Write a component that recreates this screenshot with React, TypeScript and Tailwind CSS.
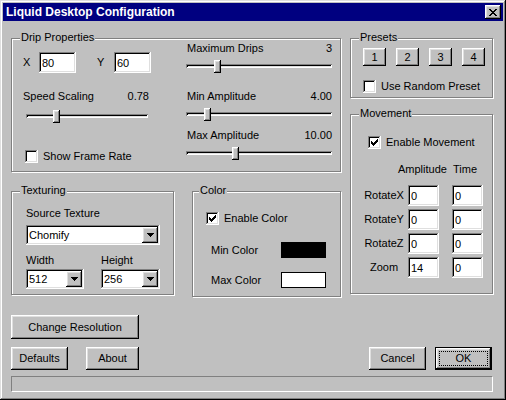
import React from 'react';

// classic win98 bevels
const raised =
  'bg-[#c0c0c0] shadow-[inset_-1px_-1px_#000,inset_1px_1px_#fff,inset_-2px_-2px_#808080,inset_2px_2px_#dfdfdf]';
const sunken =
  'bg-white shadow-[inset_-1px_-1px_#fff,inset_1px_1px_#808080,inset_-2px_-2px_#dfdfdf,inset_2px_2px_#000]';

function Group({ label, className = '', labelClass = 'left-[8px]', children }: { label: string; className?: string; labelClass?: string; children?: React.ReactNode }) {
  return (
    <div className={`relative border border-[#808080] shadow-[1px_1px_0_#fff,inset_1px_1px_0_#fff] ${className}`}>
      <span className={`absolute -top-[8px] bg-[#c0c0c0] px-[1px] ${labelClass}`}>{label}</span>
      {children}
    </div>
  );
}

function Field({ value, className = '' }: { value: string; className?: string }) {
  return (
    <input
      readOnly
      value={value}
      className={`h-[21px] pl-[3px] text-[11px] outline-none ${sunken} ${className}`}
    />
  );
}

function Arrow() {
  return (
    <svg width="7" height="4" shapeRendering="crispEdges">
      <path d="M0 0h7v1H0z M1 1h5v1H1z M2 2h3v1H2z M3 3h1v1H3z" fill="#000" />
    </svg>
  );
}

function Combo({ value, className = '' }: { value: string; className?: string }) {
  return (
    <div className={`flex h-[20px] items-center p-[2px] ${sunken} ${className}`}>
      <span className="flex-1 pl-[1px]">{value}</span>
      <div className={`flex h-[16px] w-[16px] items-center justify-center ${raised}`}>
        <Arrow />
      </div>
    </div>
  );
}

function Check({ label, checked = false, className = '' }: { label: string; checked?: boolean; className?: string }) {
  return (
    <div className={`flex items-center ${className}`}>
      <div className={`relative h-[13px] w-[13px] shrink-0 ${sunken}`}>
        {checked && (
          <svg className="absolute left-[3px] top-[3px]" width="7" height="7" shapeRendering="crispEdges">
            <path
              d="M6 0h1v1h-1z M5 1h2v1h-2z M0 2h1v1h-1z M4 2h3v1h-3z M0 3h2v1h-2z M3 3h3v1h-3z M0 4h5v1h-5z M1 5h3v1h-3z M2 6h1v1h-1z"
              fill="#000"
            />
          </svg>
        )}
      </div>
      <span className="ml-[5px]">{label}</span>
    </div>
  );
}

function Slider({ className = '', thumb }: { className?: string; thumb: string }) {
  return (
    <div className={`relative h-[13px] ${className}`}>
      <div className="absolute left-0 right-0 top-[4px] h-[4px] shadow-[inset_1px_1px_#808080,inset_-1px_-1px_#fff,inset_2px_2px_#000,inset_-2px_-2px_#dfdfdf]" />
      <div className={`absolute top-0 h-[13px] w-[7px] ${raised} ${thumb}`} />
    </div>
  );
}

function Btn({ children, className = '' }: { children: React.ReactNode; className?: string }) {
  return <button className={`flex items-center justify-center text-[11px] ${raised} ${className}`}>{children}</button>;
}

function LabelRow({ label, value, className = '' }: { label: string; value: string; className?: string }) {
  return (
    <div className={`flex justify-between ${className}`}>
      <span>{label}</span>
      <span>{value}</span>
    </div>
  );
}

const movement: [string, string, string][] = [
  ['RotateX', '0', '0'],
  ['RotateY', '0', '0'],
  ['RotateZ', '0', '0'],
  ['Zoom', '14', '0'],
];

export default function App() {
  return (
    <div className="flex h-[400px] w-[506px] flex-col bg-[#c0c0c0] p-[3px] font-['Liberation_Sans',Arial,sans-serif] text-[11px] leading-[13px] text-black shadow-[inset_-1px_-1px_#000,inset_1px_1px_#dfdfdf,inset_-2px_-2px_#808080,inset_2px_2px_#fff]">
      {/* Title bar */}
      <div className="flex h-[18px] items-center bg-[#000080] pl-[3px] pr-[2px]">
        <span className="flex-1 text-[12px] font-bold text-white">Liquid Desktop Configuration</span>
        <button className={`flex h-[14px] w-[16px] items-center justify-center pr-[1px] ${raised}`}>
          <svg width="8" height="7" shapeRendering="crispEdges">
            <path
              d="M0 0h2v1H0z M6 0h2v1H6z M1 1h2v1H1z M5 1h2v1H5z M2 2h4v1H2z M3 3h2v1H3z M2 4h4v1H2z M1 5h2v1H1z M5 5h2v1H5z M0 6h2v1H0z M6 6h2v1H6z"
              fill="#000"
            />
          </svg>
        </button>
      </div>

      <div className="flex flex-col pl-[8px] pr-[10px]">
        <div className="mt-[17px] flex items-start">
          {/* Left column */}
          <div className="flex w-[330px] flex-col">
            <Group label="Drip Properties" className="h-[134px]">
              <div className="flex pl-[11px]">
                <div className="flex w-[128px] flex-col pt-[13px]">
                  <div className="flex items-center">
                    <span className="w-[16px]">X</span>
                    <Field value="80" className="w-[37px]" />
                    <span className="ml-[21px] w-[17px]">Y</span>
                    <Field value="60" className="w-[37px]" />
                  </div>
                  <LabelRow label="Speed Scaling" value="0.78" className="mt-[17px] w-[126px]" />
                  <Slider className="ml-[3px] mt-[7px] w-[122px]" thumb="left-[27px]" />
                  <Check label="Show Frame Rate" className="ml-[2px] mt-[27px]" />
                </div>
                <div className="ml-[35px] flex w-[146px] flex-col pt-[3px]">
                  <LabelRow label="Maximum Drips" value="3" className="pl-[1px]" />
                  <Slider className="mt-[5px]" thumb="left-[28px]" />
                  <LabelRow label="Min Amplitude" value="4.00" className="mt-[17px] pl-[1px]" />
                  <Slider className="mt-[5px]" thumb="left-[18px]" />
                  <LabelRow label="Max Amplitude" value="10.00" className="mt-[8px] pl-[1px]" />
                  <Slider className="mt-[5px]" thumb="left-[46px]" />
                </div>
              </div>
            </Group>

            <div className="mt-[19px] flex items-start">
              <Group label="Texturing" className="h-[104px] w-[163px]">
                <div className="flex flex-col pl-[14px] pt-[15px]">
                  <span>Source Texture</span>
                  <Combo value="Chomify" className="mt-[5px] w-[134px]" />
                  <div className="mt-[9px] flex">
                    <span className="w-[75px]">Width</span>
                    <span>Height</span>
                  </div>
                  <div className="mt-[2px] flex">
                    <Combo value="512" className="w-[58px]" />
                    <Combo value="256" className="ml-[17px] w-[59px]" />
                  </div>
                </div>
              </Group>

              <Group label="Color" labelClass="left-[6px]" className="ml-[18px] h-[106px] w-[149px]">
                <div className="flex flex-col pl-[13px] pt-[20px]">
                  <Check label="Enable Color" checked />
                  <div className="mt-[17px] flex items-center">
                    <span className="ml-[5px] w-[70px]">Min Color</span>
                    <div className="h-[16px] w-[45px] border border-black bg-black" />
                  </div>
                  <div className="mt-[14px] flex items-center">
                    <span className="ml-[5px] w-[70px]">Max Color</span>
                    <div className="h-[16px] w-[45px] border border-black bg-white" />
                  </div>
                </div>
              </Group>
            </div>
          </div>

          {/* Right column */}
          <div className="ml-[9px] flex w-[143px] flex-col">
            <Group label="Presets" className="h-[60px]">
              <div className="flex flex-col pl-[12px] pt-[9px]">
                <div className="flex gap-[10px]">
                  {['1', '2', '3', '4'].map(n => (
                    <Btn key={n} className="h-[18px] w-[23px]">{n}</Btn>
                  ))}
                </div>
                <Check label="Use Random Preset" className="mt-[14px]" />
              </div>
            </Group>

            <Group label="Movement" className="mt-[16px] h-[180px]">
              <div className="flex flex-col pt-[21px]">
                <Check label="Enable Movement" checked className="ml-[17px]" />
                <div className="mt-[14px] flex">
                  <span className="ml-[47px] w-[55px]">Amplitude</span>
                  <span>Time</span>
                </div>
                <div className="mt-[9px] flex flex-col gap-[3px]">
                  {movement.map(([label, a, t]) => (
                    <div key={label} className="flex items-center">
                      <span className="ml-[10px] w-[46px] text-center">{label}</span>
                      <Field value={a} className="ml-[1px] w-[31px]" />
                      <Field value={t} className="ml-[13px] w-[31px]" />
                    </div>
                  ))}
                </div>
              </div>
            </Group>
          </div>
        </div>

        <Btn className="mt-[18px] h-[24px] w-[128px]">Change Resolution</Btn>

        <div className="mt-[8px] flex">
          <Btn className="h-[23px] w-[57px]">Defaults</Btn>
          <Btn className="ml-[18px] h-[23px] w-[53px]">About</Btn>
          <Btn className="ml-auto h-[23px] w-[57px]">Cancel</Btn>
          <button className={`relative ml-[9px] mr-[1px] flex h-[23px] w-[57px] items-center justify-center border border-black text-[11px] ${raised}`}>
            <span className="absolute inset-[3px] border border-dotted border-black" />
            OK
          </button>
        </div>

        <div className="mt-[6px] h-[16px] border border-b-white border-l-[#808080] border-r-white border-t-[#808080]" />
      </div>
    </div>
  );
}
